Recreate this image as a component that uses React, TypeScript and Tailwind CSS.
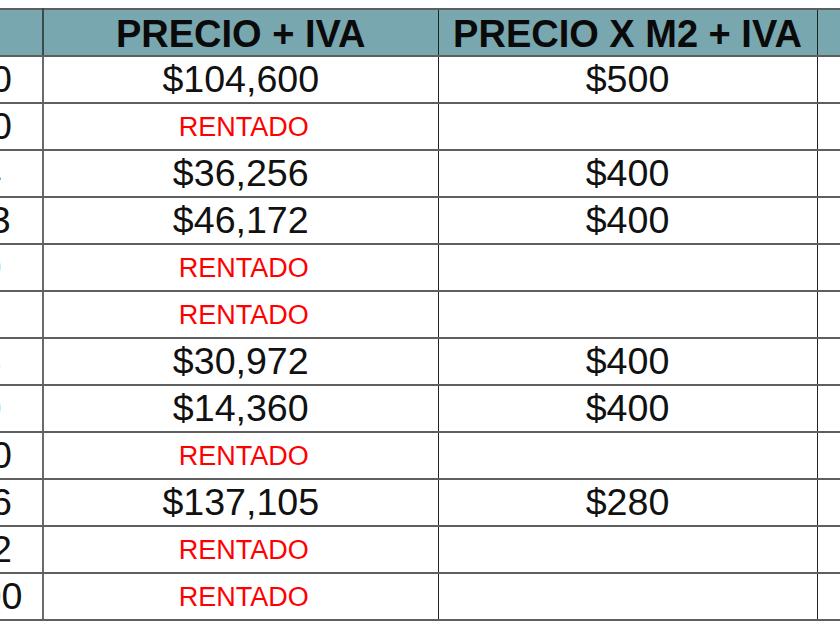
import React from 'react'

type Row = {
  area: string
  precio?: string
  m2?: string
}

// precio / precio x m2 = area
const rows: Row[] = [
  { area: '209.20', precio: '$104,600', m2: '$500' },
  { area: '150.00' },
  { area: '90.64', precio: '$36,256', m2: '$400' },
  { area: '115.43', precio: '$46,172', m2: '$400' },
  { area: '60.00' },
  { area: '55.32' },
  { area: '77.43', precio: '$30,972', m2: '$400' },
  { area: '35.90', precio: '$14,360', m2: '$400' },
  { area: '120.50' },
  { area: '489.66', precio: '$137,105', m2: '$280' },
  { area: '240.12' },
  { area: '1000.00' },
]

const hCell = 'border-y-2 border-y-[#5f5f5f] text-center align-middle p-0 leading-none h-[47px]'

export default function App() {
  return (
    <div className="w-[840px] h-[630px] overflow-hidden bg-white pt-[8px] font-['Liberation_Sans',Arial,sans-serif]">
      <table className="table-fixed border-collapse -ml-[133px] w-[1150px]">
        <colgroup>
          <col className="w-[176px]" />
          <col className="w-[395px]" />
          <col className="w-[379px]" />
          <col className="w-[200px]" />
        </colgroup>
        <thead>
          <tr className="bg-[#79a7af]">
            <th className={`${hCell} border-r-2 border-r-[#3d4b4d]`} />
            <th className={`${hCell} border-r border-r-[#1c2526] text-[38px] font-bold text-[#0a0a0a] pt-[3px]`}>
              PRECIO + IVA
            </th>
            <th className={`${hCell} border-r border-r-[#1c2526] text-[38px] font-bold text-[#0a0a0a] pt-[3px]`}>
              PRECIO X M2 + IVA
            </th>
            <th className={hCell} />
          </tr>
        </thead>
        <tbody>
          {rows.map((row) => (
            <tr key={row.area}>
              <td className={`${hCell} border-r-2 border-r-[#6a6a6a] text-[37.6px] text-[#111]`}>
                {row.area}
              </td>
              <td className={`${hCell} border-r border-r-[#222]`}>
                {row.precio ? (
                  <span className="text-[37.6px] text-[#111]">{row.precio}</span>
                ) : (
                  <span className="text-[27px] text-[#ff0000] pl-[6px] relative top-[1px]">RENTADO</span>
                )}
              </td>
              <td className={`${hCell} border-r border-r-[#222] text-[37.6px] text-[#111]`}>
                {row.m2}
              </td>
              <td className={hCell} />
            </tr>
          ))}
        </tbody>
      </table>
    </div>
  )
}
